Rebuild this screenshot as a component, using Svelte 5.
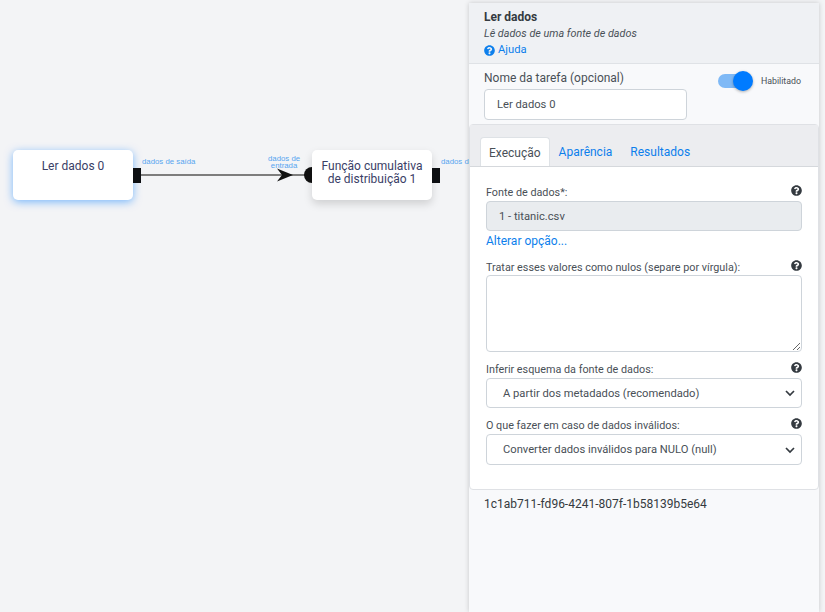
<script>
  const fields = [
    { label: "Inferir esquema da fonte de dados:", value: "A partir dos metadados (recomendado)" },
    { label: "O que fazer em caso de dados inválidos:", value: "Converter dados inválidos para NULO (null)" }
  ];
</script>

{#snippet help()}
  <svg class="help" viewBox="0 0 512 512" aria-hidden="true">
    <path fill="currentColor" d="M504 256c0 137-111 248-248 248S8 393 8 256 119 8 256 8s248 111 248 248zM262.700 90c-54.500 0-89.300 23-116.600 63.800-3.500 5.300-2.300 12.400 2.800 16.300l34.700 26.300c5.200 3.900 12.600 3 16.700-2.100 17.900-22.700 30.100-35.800 57.300-35.800 20.400 0 45.700 13.100 45.700 32.900 0 15-12.400 22.700-32.500 34-23.500 13.200-54.600 29.600-54.600 70.600V300c0 6.600 5.400 12 12 12h56c6.600 0 12-5.400 12-12v-1.300c0-28.400 83-29.600 83-106.700 0-58-60.200-102-116.500-102zM256 338c-25.400 0-46 20.600-46 46 0 25.400 20.600 46 46 46s46-20.600 46-46c0-25.400-20.600-46-46-46z"/>
  </svg>
{/snippet}

<div class="canvas">
  <div class="node selected" style="left: 13px; top: 150px;">
    <span class="title">Ler dados 0</span>
    <span class="port out"></span>
    <span class="port-label out-label">dados de saída</span>
  </div>

  <svg class="edge" width="190" height="20" viewBox="0 0 190 20">
    <path d="M0 10H170" stroke="#7d7d7d" stroke-width="2" fill="none"/>
    <path d="M136 3.500L152 10 136 16.500 141 10Z" fill="#111"/>
  </svg>

  <span class="dot"></span>
  <div class="node" style="left: 312px; top: 150px;">
    <span class="title tight">Função cumulativa de distribuição 1</span>
    <span class="port out"></span>
    <span class="port-label in-label">dados de<br />entrada</span>
    <span class="port-label out-label">dados de saída</span>
  </div>

  <aside class="panel">
    <header class="head">
      <strong>Ler dados</strong>
      <em>Lê dados de uma fonte de dados</em>
      <a href="#help" class="help-link">{@render help()} Ajuda</a>
    </header>

    <div class="name-row">
      <div class="name-field">
        <label for="task-name">Nome da tarefa (opcional)</label>
        <input id="task-name" value="Ler dados 0" />
      </div>
      <div class="toggle-wrap">
        <span class="toggle"><span class="knob"></span></span>
        <span class="toggle-label">Habilitado</span>
      </div>
    </div>

    <section class="card">
      <nav class="tabs">
        <a href="#a" class="tab active">Execução</a>
        <a href="#b" class="tab">Aparência</a>
        <a href="#c" class="tab">Resultados</a>
      </nav>
      <div class="card-body">
        <div class="field">
          <div class="label-row"><span>Fonte de dados*:</span>{@render help()}</div>
          <div class="readonly">1 - titanic.csv</div>
          <a href="#alt" class="change">Alterar opção...</a>
        </div>
        <div class="field">
          <div class="label-row"><span>Tratar esses valores como nulos (separe por vírgula):</span>{@render help()}</div>
          <textarea></textarea>
        </div>
        {#each fields as f}
          <div class="field">
            <div class="label-row"><span>{f.label}</span>{@render help()}</div>
            <div class="select">
              <span>{f.value}</span>
              <svg width="12" height="12" viewBox="0 0 12 12"><path d="M2 4l4 4 4-4" fill="none" stroke="#343a40" stroke-width="1.700"/></svg>
            </div>
          </div>
        {/each}
      </div>
    </section>

    <div class="task-id">1c1ab711-fd96-4241-807f-1b58139b5e64</div>
  </aside>
</div>

<style>
  :global(body) {
    font-family: Roboto, sans-serif;
    font-size: 12px;
    color: #343a40;
  }
  .canvas {
    position: relative;
    width: 825px;
    height: 612px;
    overflow: hidden;
    background: #f3f4f6;
  }
  a {
    color: #0d7fec;
    text-decoration: none;
  }

  .node {
    position: absolute;
    width: 120px;
    height: 50px;
    box-sizing: border-box;
    padding-top: 10px;
    background: #fff;
    border-radius: 5px;
    box-shadow: 0 4px 8px rgba(0, 0, 0, 0.15);
    color: #3a4066;
    text-align: center;
    line-height: 13px;
  }
  .node.selected {
    box-shadow: 0 2px 8px rgba(0, 123, 255, 0.5);
  }
  .title {
    position: relative;
    display: block;
  }
  .title.tight {
    padding: 0 4px;
  }
  .port {
    position: absolute;
    left: 120px;
    top: 18px;
    width: 8px;
    height: 15px;
    background: #0d0f12;
  }
  .dot {
    position: absolute;
    left: 304px;
    top: 167px;
    width: 16px;
    height: 16px;
    border-radius: 50%;
    background: #111;
  }
  .port-label {
    position: absolute;
    font-family: "Liberation Sans", sans-serif;
    font-size: 7.800px;
    line-height: 7px;
    color: #57a5f0;
    white-space: nowrap;
  }
  .out-label {
    left: 129px;
    top: 8px;
  }
  .in-label {
    left: -44px;
    top: 5px;
    text-align: center;
  }
  .edge {
    position: absolute;
    left: 141px;
    top: 165px;
  }

  .panel {
    position: absolute;
    left: 469px;
    top: 3px;
    width: 350px;
    height: 609px;
    background: #f8f9fb;
    box-shadow: 0 0 5px rgba(0, 0, 0, 0.18);
  }
  .head {
    display: flex;
    flex-direction: column;
    height: 61px;
    box-sizing: border-box;
    padding: 6px 15px 0;
    background: #eff1f4;
    border-bottom: 1px solid #dfe2e6;
    line-height: 16px;
  }
  .head em {
    font-size: 10.800px;
    line-height: 15px;
    margin-top: 1px;
    color: #495057;
  }
  .help-link {
    display: flex;
    align-items: center;
    gap: 3px;
    margin-top: 1px;
    font-size: 11.200px;
  }
  .help-link .help {
    color: #0d7fec;
    margin-top: 0;
  }
  .name-row {
    display: flex;
    justify-content: space-between;
    box-sizing: border-box;
    height: 60px;
    padding: 6px 18px 0 15px;
  }
  .name-field label {
    display: block;
    line-height: 16px;
    color: #495057;
  }
  .name-field input {
    display: block;
    box-sizing: border-box;
    width: 203px;
    height: 31px;
    margin-top: 3px;
    padding: 0 12px;
    border: 1px solid #ced4da;
    border-radius: 4px;
    background: #fff;
    color: #495057;
    font: 11.200px Roboto, sans-serif;
  }
  .toggle-wrap {
    display: flex;
    align-items: center;
    gap: 9px;
    height: 20px;
    margin-top: 1px;
  }
  .toggle {
    position: relative;
    display: block;
    width: 34px;
    height: 14px;
    border-radius: 7px;
    background: #7fb9f6;
  }
  .knob {
    position: absolute;
    right: -1px;
    top: -3px;
    width: 20px;
    height: 20px;
    border-radius: 50%;
    background: #007bff;
    box-shadow: 0 1px 3px rgba(0, 0, 0, 0.3);
  }
  .toggle-label {
    font-size: 8.800px;
    color: #495057;
  }

  .card {
    box-sizing: border-box;
    height: 366px;
    border: 1px solid #dfe1e5;
    border-radius: 4px;
    background: #fff;
  }
  .tabs {
    display: flex;
    height: 42px;
    box-sizing: border-box;
    padding: 12px 10px 0;
    background: #ecedf0;
    border-bottom: 1px solid #d5d8dc;
  }
  .tab {
    height: 29px;
    padding: 0 9px;
    line-height: 30px;
  }
  .tab.active {
    box-sizing: border-box;
    padding: 1px 8px 0;
    background: #fff;
    border: 1px solid #dee2e6;
    border-bottom: 0;
    border-radius: 4px 4px 0 0;
    color: #495057;
    line-height: 28px;
  }
  .card-body {
    padding: 17px 16px 0;
  }
  .field {
    margin-bottom: 9px;
  }
  .field:last-child .select {
    height: 31px;
  }
  .label-row {
    display: flex;
    justify-content: space-between;
    align-items: flex-start;
    height: 17px;
    font-size: 10.800px;
    line-height: 18px;
    color: #495057;
  }
  .help {
    display: block;
    width: 11px;
    height: 11px;
    margin-top: 1px;
    color: #343a40;
  }
  .readonly,
  .select {
    display: flex;
    align-items: center;
    justify-content: space-between;
    box-sizing: border-box;
    height: 30px;
    border: 1px solid #ced4da;
    border-radius: 4px;
    color: #495057;
    font-size: 11.200px;
  }
  .readonly {
    padding-left: 12px;
    background: #e9ecef;
  }
  .select {
    padding: 0 5px 0 16px;
    background: #fff;
  }
  .change {
    display: block;
    margin-top: 2px;
    line-height: 17px;
  }
  textarea {
    display: block;
    box-sizing: border-box;
    width: 100%;
    height: 77px;
    margin-top: -1px;
    border: 1px solid #ced4da;
    border-radius: 4px;
    background: #fff;
  }
  .task-id {
    padding: 6px 15px;
    line-height: 16px;
    color: #343a40;
  }
</style>
